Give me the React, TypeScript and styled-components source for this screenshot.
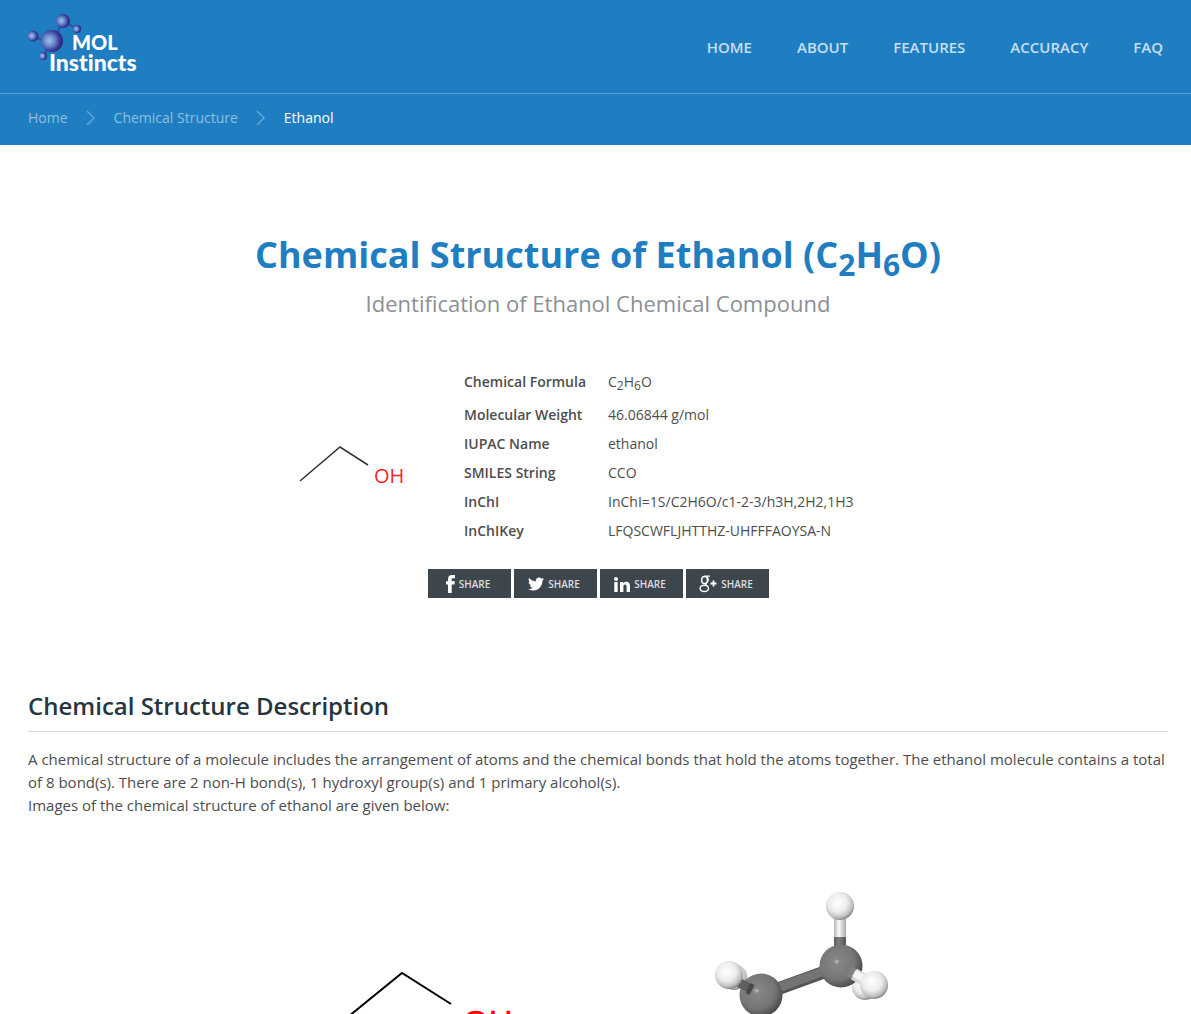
import React from "react";
import styled, { createGlobalStyle } from "styled-components";
import { FaTwitter } from "react-icons/fa";

const GlobalStyle = createGlobalStyle`
  * { box-sizing: border-box; }
  body {
    margin: 0;
    background: #fff;
    color: #4d4d4d;
    font-family: "Open Sans", "Noto Sans", sans-serif;
    font-size: 15px;
    line-height: 23px;
  }
`;

const Page = styled.div`
  height: 100vh;
  overflow: hidden;
`;

const Header = styled.header`
  background: #1f7ec1;
`;

const TopBar = styled.div`
  display: flex;
  align-items: center;
  justify-content: space-between;
  height: 94px;
  padding: 2px 28px 0;
  border-bottom: 1px solid #57a0d5;
`;

const LogoLink = styled.a`
  display: block;
  height: 70px;
  margin-bottom: 8px;
`;

const Nav = styled.nav`
  display: flex;
  gap: 45px;
`;

const NavLink = styled.a`
  color: #c7dff0;
  font-size: 15px;
  font-weight: 600;
  text-decoration: none;
  text-transform: uppercase;
`;

const Crumbs = styled.nav`
  display: flex;
  align-items: center;
  gap: 18px;
  height: 51px;
  padding: 0 28px 4px;
  font-size: 14px;
`;

const CrumbLink = styled.a`
  color: #8fbee0;
  text-decoration: none;
`;

const CrumbCurrent = styled.span`
  color: #fff;
`;

const Main = styled.main`
  padding: 85px 23px 0 28px;
`;

const Title = styled.h1`
  margin: 0;
  color: #1f7ec1;
  font-size: 36px;
  font-weight: 700;
  line-height: 50px;
  text-align: center;

  sub {
    line-height: 0;
    vertical-align: -8px;
  }
`;

const Subtitle = styled.p`
  margin: 8px 0 0;
  color: #8a9096;
  font-size: 22px;
  line-height: 30px;
  text-align: center;
`;

const Summary = styled.section`
  display: flex;
  justify-content: center;
  gap: 36px;
  margin-top: 49px;
`;

const Thumb = styled.svg`
  flex: none;
  margin-top: 13px;
`;

const Facts = styled.table`
  width: 454px;
  border-collapse: collapse;
  font-size: 14px;

  th, td {
    padding: 3px 0;
    text-align: left;
    vertical-align: top;
    font-weight: 400;
  }
  th {
    width: 144px;
    font-weight: 600;
  }
  sub {
    font-size: 12px;
    vertical-align: -3px;
  }
`;

const ShareRow = styled.div`
  display: flex;
  justify-content: center;
  gap: 3px;
  margin-top: 24px;
`;

const ShareButton = styled.button`
  display: flex;
  align-items: center;
  justify-content: center;
  gap: 4px;
  width: 83px;
  height: 29px;
  padding: 1px 2px 0 0;
  border: 0;
  background: #3e464d;
  color: #dcdee0;
  font-family: inherit;
  font-size: 10px;
  font-weight: 600;

  svg { color: #fff; }
`;

const SectionTitle = styled.h2`
  margin: 88px 0 16px;
  padding-bottom: 5px;
  border-bottom: 1px solid #d6d6d6;
  color: #263640;
  font-size: 24px;
  font-weight: 600;
  line-height: 40px;
`;

const Text = styled.p`
  margin: 0;
`;

const Gallery = styled.div`
  display: flex;
  justify-content: center;
  margin-top: 23px;
`;

const LogoWords = styled.g`
  fill: #fff;
  font-family: Lato, sans-serif;
  font-weight: 900;
  font-variant-ligatures: none;
`;

function Logo() {
  return (
    <svg width="120" height="70" viewBox="0 0 120 70" role="img" aria-label="MOL Instincts">
      <defs>
        <radialGradient id="atom" cx="0.38" cy="0.48" r="0.62">
          <stop offset="0" stopColor="#9fc3ec" />
          <stop offset="0.4" stopColor="#6a8ace" />
          <stop offset="0.75" stopColor="#3a3c98" />
          <stop offset="1" stopColor="#2a2172" />
        </radialGradient>
      </defs>
      <path d="M25 33L35 12L49 20M25 33L5 28M25 33L15 47" fill="none" stroke="#33509f" strokeWidth="2" />
      <g fill="url(#atom)">
        <circle cx="35" cy="12" r="7" />
        <circle cx="49" cy="20" r="4" />
        <circle cx="5" cy="27" r="5.500" />
        <circle cx="15" cy="47" r="4" />
        <circle cx="24" cy="32" r="11" />
      </g>
      <LogoWords>
        <text x="44" y="41" fontSize="20">MOL</text>
        <text x="21" y="62" fontSize="23">Instincts</text>
      </LogoWords>
    </svg>
  );
}

function Chevron() {
  return (
    <svg width="10" height="16" viewBox="0 0 10 16" aria-hidden="true">
      <path d="M1 1L8 8L1 15" fill="none" stroke="#62a7d8" strokeWidth="1.5" />
    </svg>
  );
}

function Facebook() {
  return (
    <svg width="9" height="18" viewBox="0 0 9 18" fill="currentColor" aria-hidden="true">
      <path d="M2 18V9.500H0V6.300H2V4.300C2 1.400 3.300 0 6.200 0H9V3.200H7C6 3.200 5.700 3.600 5.700 4.500V6.300H8.900L8.500 9.500H5.700V18Z" />
    </svg>
  );
}

function LinkedIn() {
  return (
    <svg width="16" height="15" viewBox="0 0 16 15" fill="currentColor" aria-hidden="true">
      <circle cx="2" cy="2" r="2" />
      <path d="M0.300 5H3.700V15H0.300ZM6 5H9.200V6.400C9.800 5.400 10.900 4.700 12.300 4.700C15 4.700 16 6.400 16 9V15H12.600V9.700C12.600 8.400 12.200 7.600 11.100 7.600C9.900 7.600 9.400 8.500 9.400 9.700V15H6Z" />
    </svg>
  );
}

function GooglePlus() {
  return (
    <svg width="18" height="18" viewBox="0 0 18 18" fill="none" stroke="currentColor" aria-hidden="true">
      <ellipse cx="5.6" cy="5" rx="2.9" ry="3.6" strokeWidth="1.5" />
      <path d="M5.500 1.200h5.500M8.200 1.800c1.400 2.400 1.100 4.600-.7 5.900c-1.600 1.200-1 2 .4 2.900" strokeWidth="1.300" />
      <ellipse cx="5.300" cy="13.400" rx="4.200" ry="3.100" strokeWidth="1.500" />
      <path d="M14.500 5.500v6M11.500 8.500h6" strokeWidth="1.900" />
    </svg>
  );
}

function BallAndStick() {
  return (
    <svg width="370" height="300" viewBox="0 0 370 300" role="img" aria-label="Ethanol 3D structure">
      <defs>
        <radialGradient id="hydrogen" cx="0.42" cy="0.38" r="0.62">
          <stop offset="0" stopColor="#fff" />
          <stop offset="0.55" stopColor="#ececec" />
          <stop offset="0.85" stopColor="#c0c0c0" />
          <stop offset="1" stopColor="#8a8a8a" />
        </radialGradient>
        <radialGradient id="carbon" cx="0.4" cy="0.4" r="0.65">
          <stop offset="0" stopColor="#c4c4c4" />
          <stop offset="0.1" stopColor="#868686" />
          <stop offset="0.65" stopColor="#757575" />
          <stop offset="1" stopColor="#464646" />
        </radialGradient>
        <linearGradient id="whiteStick">
          <stop offset="0" stopColor="#b4b4b4" />
          <stop offset="0.4" stopColor="#fafafa" />
          <stop offset="1" stopColor="#aaa" />
        </linearGradient>
        <linearGradient id="grayStick">
          <stop offset="0" stopColor="#5c5c5c" />
          <stop offset="0.4" stopColor="#7e7e7e" />
          <stop offset="1" stopColor="#555" />
        </linearGradient>
      </defs>
      <circle cx="136" cy="137" r="13" fill="url(#hydrogen)" />
      <circle cx="267" cy="147" r="13" fill="url(#hydrogen)" />
      <path d="M163 155L163 230" stroke="#666" strokeWidth="12" />
      <path d="M163 155L243 126" stroke="#555" strokeWidth="13" />
      <path d="M163 154L243 125" stroke="#747474" strokeWidth="9" />
      <rect x="236" y="96" width="12" height="24" fill="url(#grayStick)" />
      <rect x="236" y="74" width="12" height="23" fill="url(#whiteStick)" />
      <circle cx="242" cy="66" r="14" fill="url(#hydrogen)" />
      <circle cx="163" cy="155" r="21.500" fill="url(#carbon)" />
      <circle cx="243" cy="126" r="21.500" fill="url(#carbon)" />
      <path d="M140 142L153 149" stroke="#5e5e5e" strokeWidth="9" />
      <path d="M150 148L154 150" stroke="#484848" strokeWidth="11" />
      <path d="M251 131L258 135" stroke="#828282" strokeWidth="11" />
      <path d="M256 134L268 141" stroke="#d9d9d9" strokeWidth="12" />
      <path d="M256 133L268 140" stroke="#f5f5f5" strokeWidth="7" />
      <circle cx="131" cy="135" r="14" fill="url(#hydrogen)" />
      <circle cx="276" cy="145" r="14" fill="url(#hydrogen)" />
    </svg>
  );
}

const navItems = ["Home", "About", "Features", "Accuracy", "FAQ"];

const facts: [string, React.ReactNode][] = [
  ["Chemical Formula", <>C<sub>2</sub>H<sub>6</sub>O</>],
  ["Molecular Weight", "46.06844 g/mol"],
  ["IUPAC Name", "ethanol"],
  ["SMILES String", "CCO"],
  ["InChI", "InChI=1S/C2H6O/c1-2-3/h3H,2H2,1H3"],
  ["InChIKey", "LFQSCWFLJHTTHZ-UHFFFAOYSA-N"],
];

const shares = [
  { name: "Facebook", icon: <Facebook /> },
  { name: "Twitter", icon: <FaTwitter size={16} /> },
  { name: "LinkedIn", icon: <LinkedIn /> },
  { name: "Google Plus", icon: <GooglePlus /> },
];

export default function App() {
  return (
    <Page>
      <GlobalStyle />
      <Header>
        <TopBar>
          <LogoLink href="#"><Logo /></LogoLink>
          <Nav>
            {navItems.map((item) => (
              <NavLink key={item} href="#">{item}</NavLink>
            ))}
          </Nav>
        </TopBar>
        <Crumbs aria-label="Breadcrumb">
          <CrumbLink href="#">Home</CrumbLink>
          <Chevron />
          <CrumbLink href="#">Chemical Structure</CrumbLink>
          <Chevron />
          <CrumbCurrent>Ethanol</CrumbCurrent>
        </Crumbs>
      </Header>
      <Main>
        <Title>Chemical Structure of Ethanol (C<sub>2</sub>H<sub>6</sub>O)</Title>
        <Subtitle>Identification of Ethanol Chemical Compound</Subtitle>
        <Summary>
          <Thumb width="150" height="150" viewBox="0 0 150 150" role="img" aria-label="Ethanol structure">
            <path d="M22 101L62 67L90 85" fill="none" stroke="#333" strokeWidth="1.500" />
            <text x="96" y="103" fill="#f22" fontSize="20" fontFamily='"Open Sans", sans-serif'>OH</text>
          </Thumb>
          <Facts>
            <tbody>
              {facts.map(([label, value]) => (
                <tr key={label}>
                  <th scope="row">{label}</th>
                  <td>{value}</td>
                </tr>
              ))}
            </tbody>
          </Facts>
        </Summary>
        <ShareRow>
          {shares.map(({ name, icon }) => (
            <ShareButton key={name} type="button" title={name}>
              {icon}
              <span>SHARE</span>
            </ShareButton>
          ))}
        </ShareRow>
        <SectionTitle>Chemical Structure Description</SectionTitle>
        <Text>
          A chemical structure of a molecule includes the arrangement of atoms and the chemical bonds that hold
          the atoms together. The ethanol molecule contains a total of 8 bond(s). There are 2 non-H bond(s), 1
          hydroxyl group(s) and 1 primary alcohol(s).
        </Text>
        <Text>Images of the chemical structure of ethanol are given below:</Text>
        <Gallery>
          <svg width="370" height="300" viewBox="0 0 370 300" role="img" aria-label="Ethanol 2D structure">
            <path d="M94 198L174 133L223 164" fill="none" stroke="#000" strokeWidth="2" />
            <text x="235" y="194" fill="#f00" stroke="#f00" strokeWidth="0.500" fontSize="33" fontFamily='"Liberation Sans", sans-serif'>OH</text>
          </svg>
          <BallAndStick />
        </Gallery>
      </Main>
    </Page>
  );
}
